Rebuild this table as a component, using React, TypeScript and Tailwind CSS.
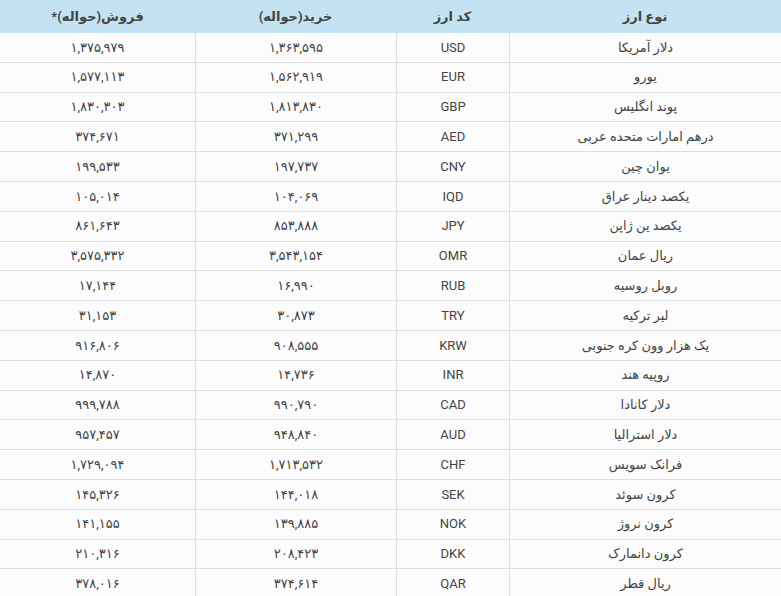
import React from "react";

const rows: [string, string, string, string][] = [
  ["دلار آمریکا", "USD", "۱,۳۶۳,۵۹۵", "۱,۳۷۵,۹۷۹"],
  ["یورو", "EUR", "۱,۵۶۲,۹۱۹", "۱,۵۷۷,۱۱۳"],
  ["پوند انگلیس", "GBP", "۱,۸۱۳,۸۳۰", "۱,۸۳۰,۳۰۳"],
  ["درهم امارات متحده عربی", "AED", "۳۷۱,۲۹۹", "۳۷۴,۶۷۱"],
  ["یوان چین", "CNY", "۱۹۷,۷۳۷", "۱۹۹,۵۳۳"],
  ["یکصد دینار عراق", "IQD", "۱۰۴,۰۶۹", "۱۰۵,۰۱۴"],
  ["یکصد ین ژاپن", "JPY", "۸۵۳,۸۸۸", "۸۶۱,۶۴۳"],
  ["ریال عمان", "OMR", "۳,۵۴۳,۱۵۴", "۳,۵۷۵,۳۳۲"],
  ["روبل روسیه", "RUB", "۱۶,۹۹۰", "۱۷,۱۴۴"],
  ["لیر ترکیه", "TRY", "۳۰,۸۷۳", "۳۱,۱۵۳"],
  ["یک هزار وون کره جنوبی", "KRW", "۹۰۸,۵۵۵", "۹۱۶,۸۰۶"],
  ["روپیه هند", "INR", "۱۴,۷۳۶", "۱۴,۸۷۰"],
  ["دلار کانادا", "CAD", "۹۹۰,۷۹۰", "۹۹۹,۷۸۸"],
  ["دلار استرالیا", "AUD", "۹۴۸,۸۴۰", "۹۵۷,۴۵۷"],
  ["فرانک سویس", "CHF", "۱,۷۱۳,۵۳۲", "۱,۷۲۹,۰۹۴"],
  ["کرون سوئد", "SEK", "۱۴۴,۰۱۸", "۱۴۵,۳۲۶"],
  ["کرون نروژ", "NOK", "۱۳۹,۸۸۵", "۱۴۱,۱۵۵"],
  ["کرون دانمارک", "DKK", "۲۰۸,۴۲۳", "۲۱۰,۳۱۶"],
  ["ریال قطر", "QAR", "۳۷۴,۶۱۴", "۳۷۸,۰۱۶"],
];

export default function App() {
  return (
    <div
      dir="rtl"
      className="w-[781px] h-[596px] overflow-hidden bg-[#fcfcfc] text-[13px] text-[#444]"
      style={{ fontFamily: "Roboto, 'DejaVu Sans', sans-serif" }}
    >
      <div className="grid grid-cols-[272px_113px_201px_195px] h-[33px] bg-[#c3e3f2] items-center text-center font-bold text-[#444]">
        <div>نوع ارز</div>
        <div>کد ارز</div>
        <div>خرید(حواله)</div>
        <div>فروش(حواله)*</div>
      </div>
      {rows.map((r) => (
        <div
          key={r[1]}
          className="grid grid-cols-[272px_113px_201px_195px] h-[29.8px] border-b border-[#dedede] text-center"
        >
          <div className="flex items-center justify-center border-l border-[#dedede]">{r[0]}</div>
          <div className="flex items-center justify-center border-l border-[#dedede]">{r[1]}</div>
          <div className="flex items-center justify-center border-l border-[#dedede]">{r[2]}</div>
          <div className="flex items-center justify-center">{r[3]}</div>
        </div>
      ))}
    </div>
  );
}
